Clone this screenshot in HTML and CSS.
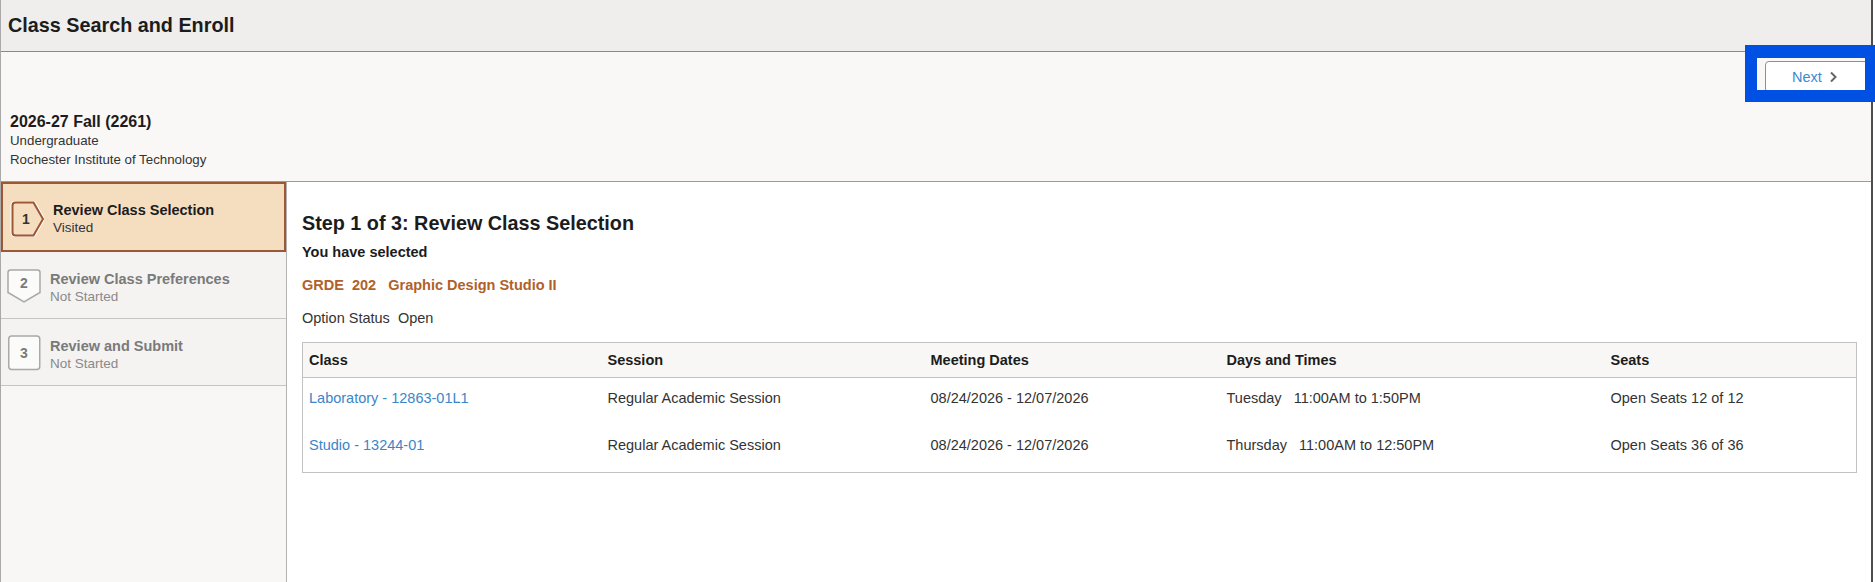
FILE: index.html
```html
<!DOCTYPE html>
<html lang="en">
<head>
<meta charset="utf-8">
<title>Class Search and Enroll</title>
<link rel="stylesheet" href="styles.css">
</head>
<body>
<div class="page">
  <header class="banner">
    <h1 class="banner-title">Class Search and Enroll</h1>
  </header>

  <section class="context">
    <div class="toolbar">
      <button class="btn-next" type="button">
        <span>Next</span>
        <svg class="chevron" width="9" height="12" viewBox="0 0 9 12" aria-hidden="true">
          <path d="M2 1.5 L6.5 6 L2 10.5" fill="none" stroke="#666" stroke-width="2"/>
        </svg>
      </button>
      <span class="focus-frame" aria-hidden="true"></span>
    </div>
    <div class="term">
      <div class="term-name">2026-27 Fall (2261)</div>
      <div class="term-line">Undergraduate</div>
      <div class="term-line">Rochester Institute of Technology</div>
    </div>
  </section>

  <div class="workspace">
    <nav class="steps">
      <div class="step step-current">
        <svg class="step-icon icon-current" width="36" height="36" viewBox="0 0 36 36" aria-hidden="true">
          <path d="M7.5 1.5 H25.5 L35 18 L25.5 34.5 H7.5 Q4.5 34.5 4.5 31.5 V4.5 Q4.5 1.5 7.5 1.5 Z" fill="none" stroke="#fff" stroke-width="4"/>
          <path d="M7.5 1.5 H25.5 L35 18 L25.5 34.5 H7.5 Q4.5 34.5 4.5 31.5 V4.5 Q4.5 1.5 7.5 1.5 Z" fill="#f5dec0" stroke="#9c5734" stroke-width="2"/>
          <text x="18" y="23" text-anchor="middle" class="step-num num-current">1</text>
        </svg>
        <div class="step-text">
          <div class="step-title">Review Class Selection</div>
          <div class="step-status">Visited</div>
        </div>
      </div>
      <div class="step">
        <svg class="step-icon" width="34" height="34" viewBox="0 0 34 34" aria-hidden="true">
          <path d="M3.5 1 H30.5 Q33 1 33 3.5 V23.5 L17 33 L1 23.5 V3.5 Q1 1 3.5 1 Z" fill="#fbfbfa" stroke="#a9a9a9" stroke-width="1.5"/>
          <text x="17" y="19" text-anchor="middle" class="step-num">2</text>
        </svg>
        <div class="step-text">
          <div class="step-title">Review Class Preferences</div>
          <div class="step-status">Not Started</div>
        </div>
      </div>
      <div class="step">
        <svg class="step-icon" width="34" height="36" viewBox="0 0 34 36" aria-hidden="true">
          <rect x="1.75" y="1" width="31" height="33.5" rx="3" fill="#fbfbfa" stroke="#a9a9a9" stroke-width="1.5"/>
          <text x="17" y="23" text-anchor="middle" class="step-num">3</text>
        </svg>
        <div class="step-text">
          <div class="step-title">Review and Submit</div>
          <div class="step-status">Not Started</div>
        </div>
      </div>
    </nav>

    <main class="content">
      <h2 class="step-heading">Step 1 of 3: Review Class Selection</h2>
      <div class="selected-label">You have selected</div>
      <div class="course-name">GRDE  202   Graphic Design Studio II</div>
      <div class="option-status">Option Status  Open</div>

      <table class="sections">
        <colgroup>
          <col class="col-class">
          <col class="col-session">
          <col class="col-dates">
          <col class="col-times">
          <col class="col-seats">
        </colgroup>
        <thead>
          <tr>
            <th>Class</th>
            <th>Session</th>
            <th>Meeting Dates</th>
            <th>Days and Times</th>
            <th>Seats</th>
          </tr>
        </thead>
        <tbody>
          <tr>
            <td><a class="class-link" href="#">Laboratory - 12863-01L1</a></td>
            <td>Regular Academic Session</td>
            <td>08/24/2026 - 12/07/2026</td>
            <td class="times">Tuesday   11:00AM to 1:50PM</td>
            <td>Open Seats 12 of 12</td>
          </tr>
          <tr>
            <td><a class="class-link" href="#">Studio - 13244-01</a></td>
            <td>Regular Academic Session</td>
            <td>08/24/2026 - 12/07/2026</td>
            <td class="times">Thursday   11:00AM to 12:50PM</td>
            <td>Open Seats 36 of 36</td>
          </tr>
        </tbody>
      </table>
    </main>
  </div>
</div>
</body>
</html>
```

FILE: styles.css
```css
* {
  box-sizing: border-box;
}

html,
body {
  margin: 0;
  padding: 0;
  background: #ffffff;
}

body {
  font-family: "Liberation Sans", Arial, sans-serif;
  color: #333333;
}

.page {
  width: 1873px;
  min-height: 582px;
  display: flex;
  flex-direction: column;
  border-left: 1px solid #a9a9a9;
  border-right: 2px solid #4d4d4d;
}

/* Top banner */
.banner {
  height: 52px;
  background: #efeeec;
  border-bottom: 1px solid #8a8a8a;
}

.banner-title {
  margin: 0;
  padding-left: 7px;
  font-size: 19.8px;
  line-height: 51px;
  font-weight: bold;
  color: #1c1c1c;
}

/* Term context strip with the Next action */
.context {
  position: relative;
  height: 130px;
  background: #f9f8f7;
  border-bottom: 1px solid #9a9a9a;
}

.toolbar {
  display: flex;
  justify-content: flex-end;
  padding: 9px 0 0 0;
}

.btn-next {
  width: 106px;
  height: 32px;
  display: flex;
  align-items: center;
  justify-content: center;
  gap: 7px;
  padding: 0 6px 0 0;
  background: #ffffff;
  border: 1px solid #8f8f8f;
  border-radius: 4px;
  font-family: inherit;
  font-size: 14.5px;
  color: #3a8acf;
  cursor: pointer;
}

.chevron {
  display: block;
}

.focus-frame {
  position: absolute;
  left: 1744px;
  top: -7px;
  width: 130px;
  height: 57px;
  border-style: solid;
  border-color: #0050e3;
  border-width: 13px 10px 12px 12px;
  pointer-events: none;
}

.term {
  padding: 19px 0 0 9px;
}

.term-name {
  font-size: 16px;
  line-height: 19px;
  font-weight: bold;
  color: #1c1c1c;
}

.term-line {
  font-size: 13.3px;
  line-height: 19px;
  color: #333333;
}

/* Work area: step navigation + step content */
.workspace {
  flex: 1;
  display: flex;
}

.steps {
  width: 286px;
  flex: none;
  background: #f8f7f6;
  border-right: 1px solid #b3b3b3;
}

.step {
  height: 67px;
  display: flex;
  align-items: center;
  padding: 2px 0 0 6px;
  gap: 9px;
  background: #f4f3f2;
  border-bottom: 1px solid #c4c4c4;
}

.step .step-text {
  margin-top: 4px;
}

.step-current {
  height: 70px;
  padding: 3px 0 0 5px;
  gap: 9px;
  background: #f5dec0;
  border: 2px solid #9c5734;
}

.step-current .step-text {
  margin-top: 0;
}

.step-icon {
  display: block;
  flex: none;
}

.step-num {
  font-family: "Liberation Sans", Arial, sans-serif;
  font-size: 14px;
  font-weight: bold;
  fill: #7a7a7a;
}

.num-current {
  fill: #333333;
}

.step-text {
  display: flex;
  flex-direction: column;
}

.step-title {
  font-size: 14.5px;
  line-height: 18px;
  font-weight: bold;
  color: #7a7a7a;
}

.step-status {
  font-size: 13.5px;
  line-height: 18px;
  color: #8a8a8a;
}

.step-current .step-title {
  color: #1c1c1c;
}

.step-current .step-status {
  color: #333333;
}

/* Step content */
.content {
  flex: 1;
  padding: 29px 14px 0 15px;
  background: #ffffff;
}

.step-heading {
  margin: 0;
  font-size: 19.8px;
  line-height: 24px;
  font-weight: bold;
  color: #1c1c1c;
}

.selected-label {
  margin-top: 9px;
  font-size: 14.5px;
  line-height: 17px;
  font-weight: bold;
  color: #1c1c1c;
}

.course-name {
  margin-top: 16px;
  font-size: 14.5px;
  line-height: 17px;
  font-weight: bold;
  color: #b0612a;
  white-space: pre;
}

.option-status {
  margin-top: 16px;
  font-size: 14.5px;
  line-height: 17px;
  color: #333333;
  white-space: pre;
}

.sections {
  margin-top: 15px;
  width: 100%;
  table-layout: fixed;
  border-collapse: collapse;
  border: 1px solid #c2c2c2;
  font-size: 14.5px;
  line-height: 17px;
}

.col-class { width: 299px; }
.col-session { width: 323px; }
.col-dates { width: 296px; }
.col-times { width: 384px; }
.col-seats { width: auto; }

.sections th {
  text-align: left;
  font-weight: bold;
  color: #1c1c1c;
  background: #f8f7f6;
  padding: 9px 6px 8px;
  border-bottom: 1px solid #c2c2c2;
}

.sections td {
  padding: 12px 6px 18px;
  color: #333333;
  vertical-align: top;
}

.sections .times {
  white-space: pre;
}

.class-link {
  color: #3a86c8;
  text-decoration: none;
}
```
